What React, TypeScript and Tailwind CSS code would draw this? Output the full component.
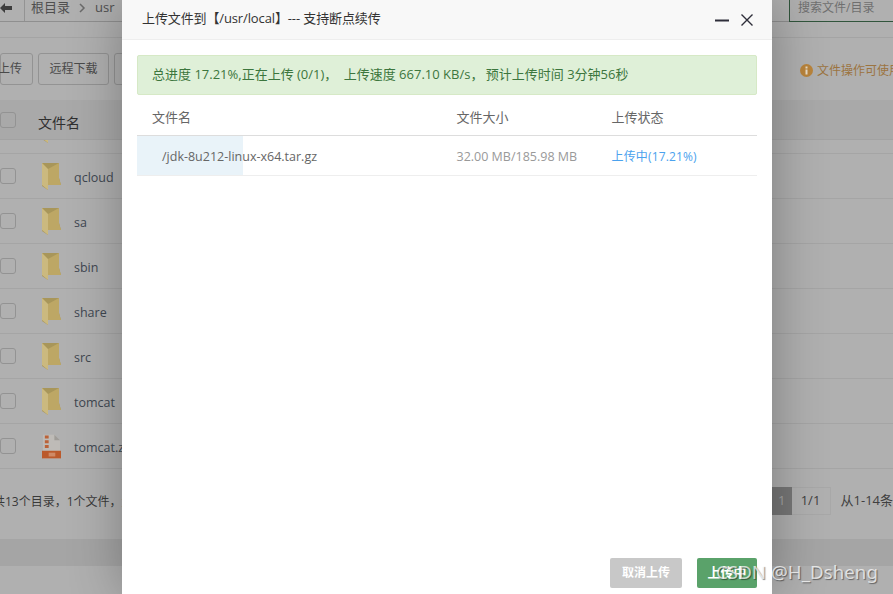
const rows = ["qcloud", "sa", "sbin", "share", "src", "tomcat"];
const font = { fontFamily: '"Open Sans","Noto Sans CJK SC",sans-serif' };

function Folder({ clip = false }: { clip?: boolean }) {
  return (
    <svg width="19" height="28" viewBox="0 0 19 28" className={clip ? "-mt-[25px]" : ""}>
      <path d="M0 1h17v15l2 7H6v5l-6-4z" fill="#a8965a" />
      <path d="M6 7l11-6v15l2 7H6z" fill="#bda765" />
      <path d="M0 1l6 6v21l-6-5z" fill="#cbb97f" />
    </svg>
  );
}

function Zip() {
  return (
    <svg width="20" height="25" viewBox="0 0 20 25">
      <path d="M1 0h12l6 6v19H1z" fill="#bebbb7" />
      <path d="M13 0l6 6h-6z" fill="#9f9c98" />
      <path d="M0 17h20v8H0z" fill="#bb5a2c" />
      <path d="M7 19h7v4H7z" fill="#cf8a66" />
      <path d="M3 1h4v3H3zM3 6h4v3H3zM3 11h4v3H3z" fill="#bb6238" />
    </svg>
  );
}

function Check() {
  return <div className="w-4 h-4 rounded-[3px] border border-[#939393] shrink-0" />;
}

function Row({ name, zip = false }: { name: string; zip?: boolean }) {
  return (
    <div className="h-[45px] shrink-0 flex items-center border-b border-[#a5a5a5]">
      <Check />
      <div className="w-[19px] ml-[26px] flex justify-center">{zip ? <Zip /> : <Folder />}</div>
      <span className="ml-[13px] mt-[5px] text-[12.5px] text-[#3f4750]">{name}</span>
    </div>
  );
}

export default function App() {
  return (
    <div className="relative w-[893px] h-[594px] overflow-hidden bg-[#b0b0b0]" style={font}>
      <div className="flex flex-col h-full">
        <div className="h-[38px] border-b border-[#a4a4a4] shrink-0">
          <div className="h-[22px] flex items-start justify-between border-b border-[#8f8f8f]">
            <div className="flex items-center h-[15px] text-[13px] text-[#4f4f4f]">
              <svg width="13" height="12" viewBox="0 0 13 12" className="shrink-0">
                <path d="M0 6l5-5v3h7v4H5v3z" fill="#3d3d3d" />
              </svg>
              <div className="w-px h-[21px] self-start bg-[#939393] ml-[11px]" />
              <span className="ml-[6px]">根目录</span>
              <svg width="8" height="10" viewBox="0 0 8 10" className="ml-[9px]">
                <path d="M1 1l4 4-4 4" fill="none" stroke="#6a6a6a" strokeWidth="1.5" />
              </svg>
              <span className="ml-[8px]">usr</span>
            </div>
            <div className="w-[104px] h-[22px] border-l border-b border-[#31553c] pl-[8px] pb-[6px] text-[12px] text-[#6f6f6f] flex items-center">
              <span>搜索文件/目录</span>
            </div>
          </div>
        </div>

        <div className="h-[62px] shrink-0 flex items-center justify-between">
          <div className="flex gap-[5px] text-[12px] text-[#4a4a4a]">
            <div className="w-[33px] h-[32px] border border-[#939393] rounded-[3px] flex items-center justify-end pr-[10px] whitespace-nowrap">上传</div>
            <div className="w-[71px] h-[32px] border border-[#939393] rounded-[3px] flex items-center justify-center">远程下载</div>
            <div className="w-[40px] h-[32px] border border-[#939393] rounded-[3px]" />
          </div>
          <div className="w-[93px] mt-[3px] flex items-center gap-[4px] text-[12px] text-[#9c7440] whitespace-nowrap overflow-hidden">
            <svg width="13" height="13" viewBox="0 0 13 13" className="shrink-0">
              <circle cx="6.5" cy="6.5" r="6.5" fill="#b9843c" />
              <rect x="5.5" y="5.5" width="2" height="5" fill="#e8dcc8" />
              <rect x="5.5" y="2.500" width="2" height="2" fill="#e8dcc8" />
            </svg>
            文件操作可使用
          </div>
        </div>

        <div className="h-[40px] shrink-0 bg-[#a9a9a9] flex items-center border-b border-[#a2a2a2]">
          <div className="mt-[1px]"><Check /></div>
          <span className="ml-[22px] mt-[5px] text-[14px] text-[#2f2f2f]">文件名</span>
        </div>

        <div className="h-[14px] shrink-0 overflow-hidden border-b border-[#a5a5a5]">
          <div className="ml-[42px]"><Folder clip /></div>
        </div>
        {rows.map((r) => (
          <Row key={r} name={r} />
        ))}
        <Row name="tomcat.zip" zip />

        <div className="h-[70px] shrink-0 flex items-start justify-between pt-[18px]">
          <span className="text-[12px] text-[#3a3a3a] -ml-[7px] mt-[6px] whitespace-nowrap">共13个目录，1个文件，大小</span>
          <div className="flex items-center h-[28px] text-[13px] text-[#404040] w-[121px] shrink-0">
            <div className="w-[20px] h-[28px] bg-[#777777] text-[#a5a5a5] flex items-center justify-center">1</div>
            <div className="w-[40px] h-[28px] border-y border-r border-[#a8a8a8] flex items-center justify-center">1/1</div>
            <span className="ml-[10px] whitespace-nowrap">从1-14条</span>
          </div>
        </div>

        <div className="h-[27px] shrink-0 bg-[#a5a5a5]" />
      </div>

      <div className="absolute top-0 bottom-0 left-[122px] w-[650px] bg-white shadow-[1px_1px_50px_rgba(0,0,0,0.3)] flex flex-col">
        <div className="h-[40px] shrink-0 bg-[#f8f8f8] border-b border-[#eeeeee] flex items-center justify-between pl-[20px] pr-[19px]">
          <span className="text-[13px] tracking-[-0.12px] text-[#333333] whitespace-nowrap -mt-[2px]">上传文件到【/usr/local】--- 支持断点续传</span>
          <div className="flex items-center gap-[12px]">
            <svg width="14" height="14" viewBox="0 0 14 14"><path d="M0 7.500h14" stroke="#2e2e3a" strokeWidth="2" /></svg>
            <svg width="12" height="12" viewBox="0 0 12 12"><path d="M.5.500l11 11M11.500.500l-11 11" stroke="#2e2e3a" strokeWidth="1.400" /></svg>
          </div>
        </div>

        <div className="flex-1 flex flex-col px-[15px] pt-[15px] pb-[6px]">
          <div className="h-[40px] shrink-0 rounded-[2px] bg-[#dff0d8] border border-[#d6e9c6] flex items-center pl-[14px] text-[13px] text-[#3c763d] whitespace-pre">
            <span>总进度 17.21%,正在上传 (0/1)<span className="tracking-[3px]">，</span> 上传速度 667.10 KB/s<span className="tracking-[-1px]">，</span> 预计上传时间 3分钟56秒</span>
          </div>

          <div className="h-[41px] shrink-0 flex items-center border-b border-[#dddddd] text-[13px] text-[#666666]">
            <span className="w-[319.5px] pl-[15px] mt-[5px]">文件名</span>
            <span className="w-[155px] mt-[5px]">文件大小</span>
            <span className="mt-[5px]">上传状态</span>
          </div>

          <div className="relative h-[40px] shrink-0 flex items-center border-b border-[#eeeeee] text-[12.5px]">
            <div className="absolute left-0 top-0 bottom-0 w-[106px] bg-[#e9f3f9]" />
            <span className="relative w-[319.5px] pl-[25px] mt-[3px] text-[#666666]">/jdk-8u212-linux-x64.tar.gz</span>
            <span className="relative w-[155px] mt-[3px] text-[#999999]">32.00 MB/185.98 MB</span>
            <span className="relative mt-[3px] text-[12px] tracking-[0.15px] text-[#4ba2ee]">上传中(17.21%)</span>
          </div>

          <div className="flex-1" />

          <div className="flex justify-end gap-[15px] text-[12px] font-bold text-white">
            <div className="w-[72px] h-[30px] rounded-[2px] bg-[#c8c8c8] flex items-center justify-center">取消上传</div>
            <div className="w-[60px] h-[30px] rounded-[2px] bg-[#5aa26a] flex items-center justify-center text-[13px]">上传中</div>
          </div>
        </div>
      </div>

      <div className="absolute left-[716px] top-[558px] text-[18.75px] leading-[28px] text-[#ffffffb8] [text-shadow:1px_1px_1px_rgba(0,0,0,0.45)] whitespace-nowrap" style={{ fontFamily: '"Noto Sans",sans-serif' }}>
        CSDN @H_Dsheng
      </div>
    </div>
  );
}
